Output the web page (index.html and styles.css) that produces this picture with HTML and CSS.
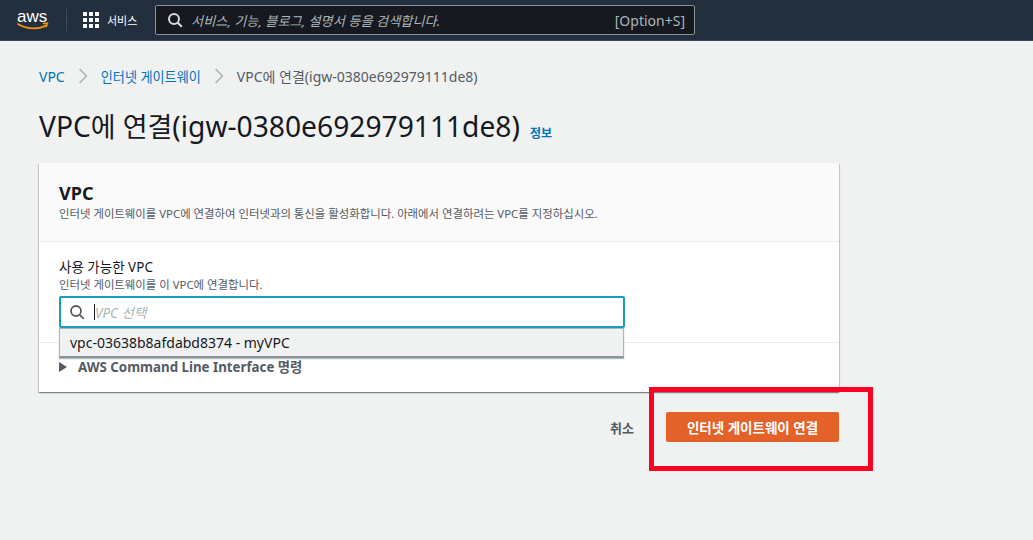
FILE: index.html
```html
<!DOCTYPE html>
<html lang="ko">
<head>
<meta charset="utf-8">
<title>VPC에 연결</title>
<link rel="stylesheet" href="styles.css">
</head>
<body>
<header class="topbar">
  <svg class="logo" width="38" height="22" viewBox="0 0 38 22">
    <text x="0" y="12" class="logo-text">aws</text>
    <path d="M1 14c8 5 20 6 28 1.500" fill="none" stroke="#f90" stroke-width="1.600" stroke-linecap="round"/>
    <path d="M26.500 13.500l4-.3-1.300 3.600" fill="none" stroke="#f90" stroke-width="1.400" stroke-linecap="round"/>
  </svg>
  <span class="topbar-sep"></span>
  <svg class="grid-icon" width="16" height="16" viewBox="0 0 16 16" fill="#fff">
    <rect x="0" y="0" width="4" height="4"/><rect x="6" y="0" width="4" height="4"/><rect x="12" y="0" width="4" height="4"/>
    <rect x="0" y="6" width="4" height="4"/><rect x="6" y="6" width="4" height="4"/><rect x="12" y="6" width="4" height="4"/>
    <rect x="0" y="12" width="4" height="4"/><rect x="6" y="12" width="4" height="4"/><rect x="12" y="12" width="4" height="4"/>
  </svg>
  <span class="services">서비스</span>
  <div class="global-search">
    <svg width="16" height="16" viewBox="0 0 16 16" fill="none" stroke="#d5dbdb" stroke-width="2"><circle cx="7" cy="7" r="5"/><path d="M10.800 10.800l4 4"/></svg>
    <span class="global-placeholder">서비스, 기능, 블로그, 설명서 등을 검색합니다.</span>
    <span class="shortcut">[Option+S]</span>
  </div>
</header>

<main class="page">
  <nav class="crumbs">
    <a class="crumb-link">VPC</a>
    <svg class="crumb-chevron" width="10" height="16" viewBox="0 0 10 16" fill="none" stroke="#aab7b8" stroke-width="1.600"><path d="M1.500 1l7 7-7 7"/></svg>
    <a class="crumb-link crumb-ko">인터넷 게이트웨이</a>
    <svg class="crumb-chevron" width="10" height="16" viewBox="0 0 10 16" fill="none" stroke="#aab7b8" stroke-width="1.600"><path d="M1.500 1l7 7-7 7"/></svg>
    <span class="crumb-current">VPC에 연결(igw-0380e692979111de8)</span>
  </nav>

  <div class="title-row">
    <h1 class="title">VPC<span class="title-ko">에 연결</span>(igw-0380e692979111de8)</h1>
    <a class="info">정보</a>
  </div>

  <section class="card">
    <div class="card-head">
      <h2 class="card-title">VPC</h2>
      <p class="card-desc">인터넷 게이트웨이를 VPC에 연결하여 인터넷과의 통신을 활성화합니다. 아래에서 연결하려는 VPC를 지정하십시오.</p>
    </div>
    <div class="card-body">
      <div class="field-label">사용 가능한 VPC</div>
      <div class="field-desc">인터넷 게이트웨이를 이 VPC에 연결합니다.</div>
      <div class="select-wrap">
        <div class="select-input">
          <svg width="16" height="16" viewBox="0 0 16 16" fill="none" stroke="#545b64" stroke-width="1.800"><circle cx="7" cy="7" r="5"/><path d="M10.800 10.800l4 4"/></svg>
          <span class="caret"></span>
          <span class="select-placeholder">VPC 선택</span>
        </div>
        <div class="select-menu">vpc-03638b8afdabd8374 - myVPC</div>
      </div>
    </div>
    <div class="card-foot">
      <span class="triangle"></span>
      <span class="foot-label">AWS Command Line Interface 명령</span>
    </div>
  </section>

  <div class="actions">
    <span class="cancel">취소</span>
    <button class="primary">인터넷 게이트웨이 연결</button>
    <span class="highlight"></span>
  </div>
</main>
</body>
</html>
```
FILE: styles.css
```css
* { box-sizing: border-box; }
html, body { margin: 0; height: 100%; }
body {
  background: #f0f1f1;
  font-family: "Noto Sans", "Noto Sans CJK KR", sans-serif;
  color: #16191f;
  overflow: hidden;
}
.topbar {
  height: 41px;
  background: #232f3e;
  border-bottom: 1px solid #3b4755;
  display: flex;
  align-items: center;
  padding-left: 17px;
}
.logo { flex: none; margin-top: 2px; }
.logo-text { font-family: "Liberation Sans", sans-serif; font-size: 17px; fill: #fff; }
.topbar-sep { width: 1px; height: 22px; background: #414d5c; margin: 0 16px 0 11px; }
.grid-icon { flex: none; }
.services { color: #fff; font-size: 11px; margin-left: 8px; width: 40px; }
.global-search {
  width: 540px;
  height: 30px;
  margin-left: 8px;
  background: #16191f;
  border: 1px solid #879596;
  border-radius: 2px;
  display: flex;
  align-items: center;
  padding: 0 9px 0 11px;
  color: #aab7b8;
}
.global-placeholder { font-style: italic; margin-left: 8px; flex: 1; font-size: 13.200px; }
.shortcut { font-size: 14px; }
.page { padding: 0 39px; position: relative; }
.crumbs { display: flex; align-items: center; height: 20px; margin-top: 25px; font-size: 14px; }
.crumb-link { color: #0073bb; }
.crumb-ko { font-size: 13.150px; }
.crumb-chevron { margin: 0 13px; }
.crumb-current { color: #545b64; }
.title-row { display: flex; align-items: baseline; margin-top: 20px; height: 40px; }
.title { margin: 0; font-size: 28.200px; font-weight: 400; line-height: 40px; }
.title-ko { font-size: 27px; }
.info { color: #0073bb; font-size: 12px; font-weight: 700; margin-left: 10px; position: relative; top: 1px; }
.card {
  width: 800px;
  margin-top: 17px;
  height: 229px;
  background: #fff;
  box-shadow: 0 1px 1px 0 rgba(0,28,36,.3), 1px 1px 1px 0 rgba(0,28,36,.15), -1px 1px 1px 0 rgba(0,28,36,.15);
}
.card-head {
  height: 79px;
  background: #fafafa;
  border-bottom: 1px solid #eaeded;
  padding: 17px 20px 0;
}
.card-title { margin: 0; font-size: 18px; font-weight: 700; line-height: 26px; }
.card-desc { margin: 0; font-size: 11.400px; line-height: 16px; color: #545b64; }
.card-body { height: 101px; padding: 15px 20px 0; border-bottom: 1px solid #eaeded; }
.field-label { font-size: 13.500px; line-height: 21px; }
.field-desc { font-size: 11.400px; line-height: 14px; color: #545b64; }
.select-wrap { position: relative; margin-top: 4px; }
.select-input {
  height: 32px;
  width: 566px;
  background: #fff;
  border: 2px solid #1a9bc0;
  border-radius: 2px;
  display: flex;
  align-items: center;
  padding-left: 8px;
}
.caret { width: 1px; height: 16px; background: #16191f; margin-left: 9px; }
.select-placeholder { font-style: italic; font-size: 13.500px; color: #aab7b8; }
.select-menu {
  position: absolute;
  left: 0;
  top: 32px;
  width: 565px;
  height: 30px;
  background: #f0f1f1;
  border: 1px solid #aab7b8;
  border-bottom: 2px solid #879596;
  box-shadow: 0 1px 1px rgba(0,28,36,.3);
  font-size: 14px;
  line-height: 27px;
  padding-left: 10px;
}
.card-foot { display: flex; align-items: center; padding: 14px 20px 0; }
.triangle { width: 0; height: 0; border-left: 8px solid #545b64; border-top: 5px solid transparent; border-bottom: 5px solid transparent; margin-right: 11px; }
.foot-label { font-size: 13.300px; font-weight: 700; color: #545b64; }
.actions { width: 800px; margin-top: 20px; display: flex; justify-content: flex-end; align-items: center; position: relative; }
.cancel { font-size: 13px; font-weight: 700; color: #545b64; margin-right: 32px; }
.primary {
  width: 173px;
  height: 30px;
  background: #e5612a;
  border: 0;
  border-radius: 2px;
  color: #fff;
  font: 700 13.500px "Noto Sans", "Noto Sans CJK KR", sans-serif;
  padding: 0;
}
.highlight {
  position: absolute;
  left: 610px;
  top: -25px;
  width: 224px;
  height: 84px;
  border: 5px solid #ff0022;
}
```
